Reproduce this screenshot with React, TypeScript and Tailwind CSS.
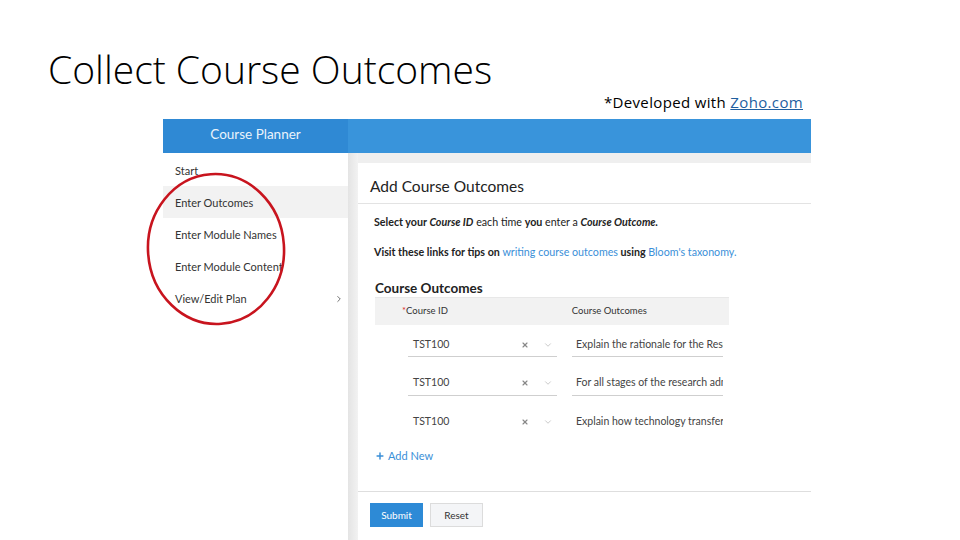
import { ChevronDown, ChevronRight, Plus, X } from "lucide-react";

const navItems = ["Start", "Enter Outcomes", "Enter Module Names", "Enter Module Content", "View/Edit Plan"];

const rows = [
  { id: "TST100", text: "Explain the rationale for the Rese", line: true },
  { id: "TST100", text: "For all stages of the research admi", line: true },
  { id: "TST100", text: "Explain how technology transfer c", line: false },
];

function Sidebar() {
  return (
    <div className="w-[185px] shrink-0 bg-white pt-[1px]">
      {navItems.map((item) => (
        <div
          key={item}
          className={`flex h-[32px] items-center pl-[12px] pr-[4px] pt-[2px] text-[11px] text-[#333] ${
            item === "Enter Outcomes" ? "bg-[#f2f2f2]" : ""
          }`}
        >
          <span>{item}</span>
          {item === "View/Edit Plan" && <ChevronRight className="ml-auto h-[10px] w-[10px] text-[#555]" strokeWidth={2} />}
        </div>
      ))}
    </div>
  );
}

function OutcomeRow({ id, text, line }: { id: string; text: string; line: boolean }) {
  return (
    <div className="flex h-[38.5px] pt-[8px]">
      <div
        className={`ml-[33px] flex h-[24px] w-[149px] items-center pl-[5px] pr-[4px] text-[10.5px] text-[#444] ${
          line ? "border-b border-[#cfcfcf]" : ""
        }`}
      >
        <span>{id}</span>
        <X className="ml-auto h-[8px] w-[8px] text-[#888]" strokeWidth={3.5} />
        <ChevronDown className="ml-[14px] h-[10px] w-[10px] text-[#aaa]" strokeWidth={1.5} />
      </div>
      <div
        className={`ml-[15px] flex h-[24px] w-[151px] items-center overflow-hidden whitespace-nowrap pl-[4px] text-[10.5px] text-[#444] ${
          line ? "border-b border-[#cfcfcf]" : ""
        }`}
      >
        {text}
      </div>
    </div>
  );
}

function MainCard() {
  return (
    <div className="flex flex-1 flex-col bg-white">
      <div className="h-[41px] border-b border-[#e3e3e3] pl-[12px] pt-[13px] text-[15.5px] leading-[20px] text-[#222]">
        Add Course Outcomes
      </div>
      <div className="pl-[16px] pt-[11px] text-[10.7px] leading-[14px] text-[#222]">
        <p>
          <span className="font-bold">Select your </span>
          <span className="font-bold italic">Course ID</span>
          <span> each time </span>
          <span className="font-bold">you</span>
          <span> enter a </span>
          <span className="font-bold italic">Course Outcome.</span>
        </p>
        <p className="mt-[16px]">
          <span className="font-bold">Visit these links for tips on </span>
          <span className="text-[#3a8fd8]">writing course outcomes</span>
          <span className="font-bold"> using </span>
          <span className="text-[#3a8fd8]">Bloom's taxonomy.</span>
        </p>
      </div>
      <div className="pl-[17px]">
        <h2 className="mt-[20px] text-[13.5px] font-bold leading-[18px] text-[#222]">Course Outcomes</h2>
        <div className="w-[354px]">
          <div className="flex h-[28px] items-center border-t border-[#e8e8e8] bg-[#f2f2f2] text-[9.5px] text-[#333]">
            <span className="ml-[27px] text-[#d33]">*</span>
            <span>Course ID</span>
            <span className="ml-[124px]">Course Outcomes</span>
          </div>
          {rows.map((r, i) => (
            <OutcomeRow key={i} {...r} />
          ))}
        </div>
        <div className="mt-[8.5px] flex h-[14px] items-center text-[11px] text-[#3a8fd8]">
          <Plus className="h-[10px] w-[10px]" strokeWidth={3.5} />
          <span className="ml-[3px]">Add New</span>
        </div>
      </div>
      <div className="mt-[28px] border-t border-[#dedede]" />
      <div className="flex gap-[7px] pl-[12px] pt-[11px]">
        <button className="h-[24px] w-[53px] bg-[#2d8ad6] text-[10px] text-white">Submit</button>
        <button className="h-[24px] w-[53px] border border-[#dcdcdc] bg-[#f4f5f7] text-[10px] text-[#333]">
          Reset
        </button>
      </div>
    </div>
  );
}

export default function App() {
  return (
    <div className="relative h-[540px] w-[960px] overflow-hidden bg-white">
      <div className="flex h-[119px]">
        <h1
          className="pl-[48px] pt-[39px] text-[39px] font-light leading-[60px] text-black"
          style={{ fontFamily: '"Open Sans", sans-serif' }}
        >
          Collect Course Outcomes
        </h1>
        <p
          className="ml-auto mr-[157px] pt-[91px] text-[15px] leading-[22px] tracking-[0.35px] text-black"
          style={{ fontFamily: '"Open Sans", sans-serif' }}
        >
          *Developed with <span className="text-[#1f5f9f] underline">Zoho.com</span>
        </p>
      </div>

      <div
        className="ml-[163px] flex h-[421px] w-[648px] flex-col overflow-hidden"
        style={{ fontFamily: "Lato, sans-serif" }}
      >
        <div className="flex h-[34px] shrink-0">
          <div className="flex w-[185px] items-center justify-center bg-[#2f89d4] pb-[3px] text-[13.5px] text-[#eaf3fb]">
            Course Planner
          </div>
          <div className="flex-1 bg-[#3994db]" />
        </div>
        <div className="flex flex-1">
          <Sidebar />
          <div className="w-[10px] shrink-0 bg-gradient-to-r from-[#e4e4e4] to-[#f2f2f2]" />
          <div className="flex flex-1 flex-col">
            <div className="h-[10px] shrink-0 bg-[#efefef]" />
            <MainCard />
          </div>
        </div>
      </div>

      <svg className="pointer-events-none absolute left-[140px] top-[167px]" width="154" height="164" viewBox="0 0 154 164">
        <ellipse cx="76" cy="82" rx="68" ry="75" fill="none" stroke="#c8141e" strokeWidth="2.6" transform="rotate(-4 76 82)" />
      </svg>
    </div>
  );
}
